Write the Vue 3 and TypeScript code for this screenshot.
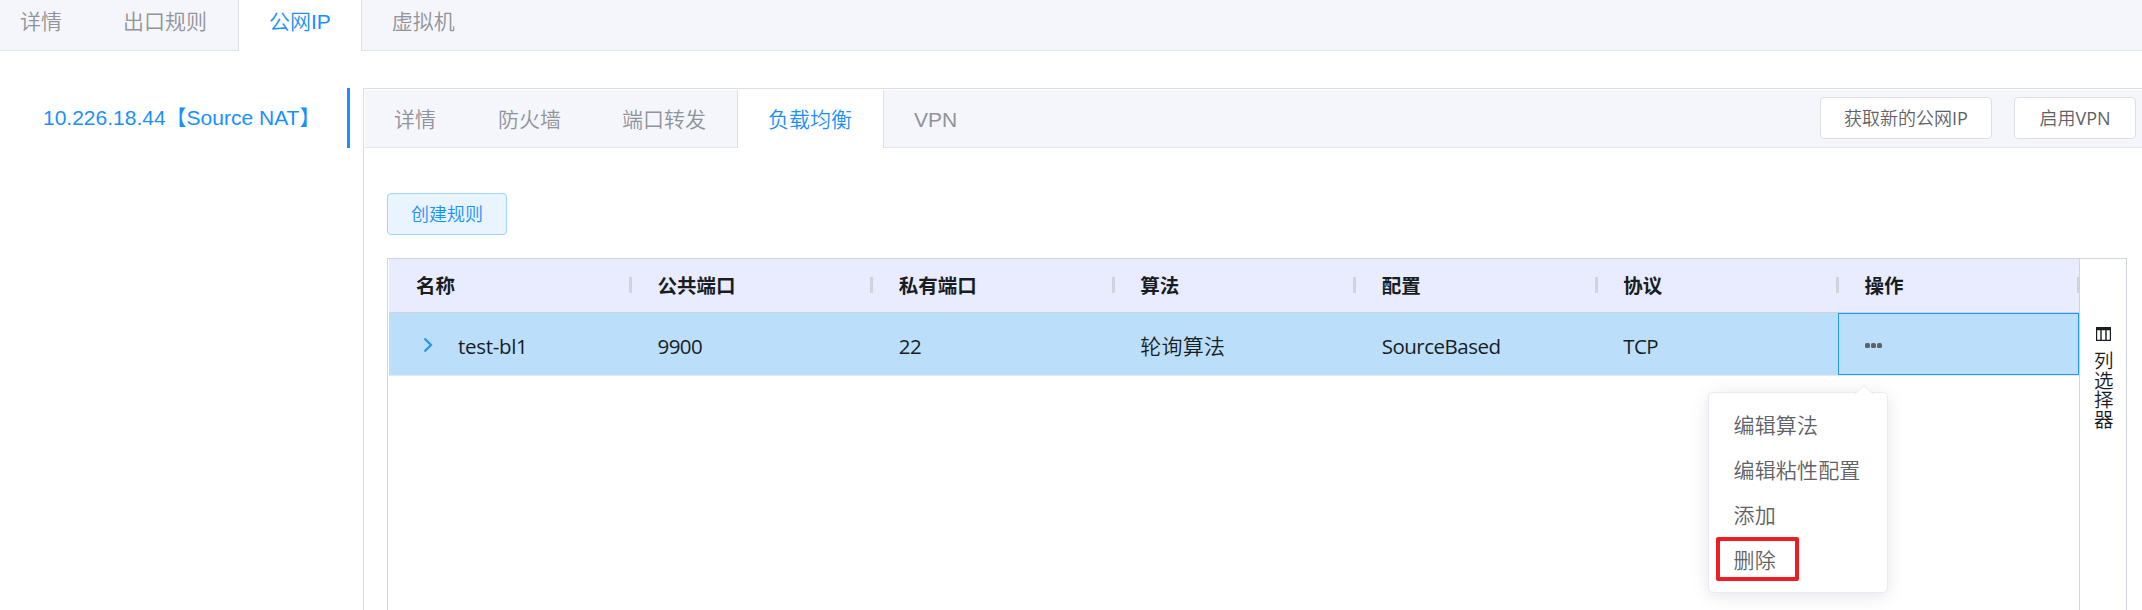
<script setup lang="ts">
import { ref } from 'vue'

interface Column {
  key: string
  title: string
}

const outerTabs = ['详情', '出口规则', '公网IP', '虚拟机']
const innerTabs = ['详情', '防火墙', '端口转发', '负载均衡', 'VPN']
const activeOuter = ref('公网IP')
const activeInner = ref('负载均衡')

const columns: Column[] = [
  { key: 'name', title: '名称' },
  { key: 'publicPort', title: '公共端口' },
  { key: 'privatePort', title: '私有端口' },
  { key: 'algorithm', title: '算法' },
  { key: 'config', title: '配置' },
  { key: 'protocol', title: '协议' },
  { key: 'actions', title: '操作' },
]

const rows: Record<string, string>[] = [
  {
    name: 'test-bl1',
    publicPort: '9900',
    privatePort: '22',
    algorithm: '轮询算法',
    config: 'SourceBased',
    protocol: 'TCP',
  },
]

const menu = ['编辑算法', '编辑粘性配置', '添加', '删除']
</script>

<template>
  <div class="page">
    <nav class="tabs outer">
      <button
        v-for="t in outerTabs"
        :key="t"
        class="tab"
        :class="{ active: t === activeOuter }"
        @click="activeOuter = t"
      >{{ t }}</button>
      <span class="fill"></span>
    </nav>

    <div class="body">
      <aside class="ips">
        <div class="ip">10.226.18.44【Source NAT】</div>
      </aside>

      <section class="panel">
        <nav class="tabs inner">
          <button
            v-for="t in innerTabs"
            :key="t"
            class="tab"
            :class="{ active: t === activeInner }"
            @click="activeInner = t"
          >{{ t }}</button>
          <div class="fill tools">
            <button class="btn wide">获取新的公网<span class="latin">IP</span></button>
            <button class="btn narrow">启用<span class="latin">VPN</span></button>
          </div>
        </nav>

        <div class="content">
          <button class="btn primary">创建规则</button>

          <div class="grid">
            <div class="main">
              <div class="row head">
                <div v-for="c in columns" :key="c.key" class="cell">
                  {{ c.title }}<i class="sep"></i>
                </div>
              </div>
              <div v-for="r in rows" :key="r.name" class="row data">
                <div
                  v-for="c in columns"
                  :key="c.key"
                  class="cell"
                  :class="['c-' + c.key, { focus: c.key === 'actions' }]"
                >
                  <svg v-if="c.key === 'name'" class="chev" width="10" height="16" viewBox="0 0 10 16">
                    <path d="M1.5 1.5 8 8 1.5 14.5" fill="none" stroke="#2196f3" stroke-width="2.2" />
                  </svg>
                  <template v-if="c.key === 'actions'">
                    <svg class="dots" width="17" height="5" viewBox="0 0 17 5" fill="#606266">
                      <rect x="0" width="5" height="5" rx="1.6" />
                      <rect x="6" width="5" height="5" rx="1.6" />
                      <rect x="12" width="5" height="5" rx="1.6" />
                    </svg>
                    <div class="menu">
                      <svg class="arrow" width="18" height="9" viewBox="0 0 18 9">
                        <path d="M0 9 9 .8 18 9" fill="#fff" stroke="#e6ebf5" />
                      </svg>
                      <div v-for="m in menu" :key="m" class="item" :class="{ marked: m === '删除' }">
                        {{ m }}
                      </div>
                    </div>
                  </template>
                  <span v-else>{{ r[c.key] }}</span>
                </div>
              </div>
            </div>
            <div class="side">
              <svg width="15" height="14" viewBox="0 0 15 14">
                <path d="M0 0h15v14H0zM1.2 3.2v9.6h3.1V3.2zM5.7 3.2v9.6h3.6V3.2zM10.7 3.2v9.6h3.1V3.2z" fill="#181d1f" fill-rule="evenodd" />
              </svg>
              <span>列选择器</span>
            </div>
          </div>
        </div>
      </section>
    </div>
  </div>
</template>

<style>
body {
  margin: 0;
  overflow: hidden;
}
</style>

<style scoped>
.page {
  width: 2142px;
  height: 610px;
  overflow: hidden;
  display: flex;
  flex-direction: column;
  background: #fff;
  font: 350 21px/24px "Liberation Sans", "Noto Sans CJK SC", sans-serif;
}
.page *,
.page *::after {
  box-sizing: border-box;
}
button {
  font: inherit;
  margin: 0;
  white-space: nowrap;
}
.tabs {
  display: flex;
  flex: none;
}
.tab,
.fill {
  background: #f5f6fb;
  border: 0 solid #dcdfe6;
  border-bottom: 1px solid #dfe4ed;
}
.tab {
  color: #909399;
  padding: 0 31px 0 30px;
}
.tab.active {
  color: #1890ff;
  background: #fff;
  border-width: 0 1px;
  padding: 0 30px;
}
.fill {
  flex: 1;
}
.outer {
  height: 51px;
}
.outer .tab {
  padding-bottom: 7px;
}
.outer .tab:first-child {
  padding-left: 20px;
}
.body {
  flex: 1;
  display: flex;
  padding-top: 37px;
  min-height: 0;
}
.ips {
  width: 350px;
  margin-right: 13px;
  flex: none;
}
.ip {
  height: 60px;
  line-height: 60px;
  padding-left: 43px;
  border-right: 3px solid #1890ff;
  color: #1890ff;
  white-space: nowrap;
}
.panel {
  flex: 1;
  min-width: 0;
  display: flex;
  flex-direction: column;
  border: solid #dcdfe6;
  border-width: 1px 0 0 1px;
}
.inner {
  height: 59px;
  padding: 1px 0 0 1px;
}
.inner .tab {
  padding-top: 2px;
}
.inner .tab:first-child {
  padding-left: 29px;
  padding-right: 32px;
}
.inner .tab.active {
  padding-right: 31px;
}
.tools {
  display: flex;
  justify-content: flex-end;
  gap: 22px;
  padding: 7px 6px 0 0;
}
.btn {
  height: 42px;
  padding: 0 23px;
  border: 1px solid #dcdfe6;
  border-radius: 4px;
  background: #fff;
  color: #606266;
  font: 350 18px/38px "Open Sans", "Noto Sans CJK SC", sans-serif;
}
.tools .btn {
  padding: 0;
}
.wide {
  width: 172px;
}
.narrow {
  width: 122px;
}
.latin {
  font-weight: 400;
}
.primary {
  align-self: flex-start;
  color: #1890ff;
  background: #e8f4ff;
  border-color: #a3d3ff;
}
.content {
  flex: 1;
  display: flex;
  flex-direction: column;
  gap: 23px;
  padding: 45px 15px 0 23px;
}
.grid {
  flex: 1;
  display: flex;
  border: solid #d0d4dc;
  border-width: 1px 1px 0;
  color: #181d1f;
  font-family: "Open Sans", "Noto Sans CJK SC", sans-serif;
}
.main {
  flex: 1;
  padding-left: 1px;
}
.row {
  display: grid;
  grid-template-columns: repeat(7, 1fr);
}
.cell {
  position: relative;
  display: flex;
  align-items: center;
  padding-left: 27px;
}
.head {
  height: 54px;
  background: #e9ecfe;
  border-bottom: 1px solid #cfd1dd;
  font-size: 19.5px;
  font-weight: 700;
}
.sep {
  position: absolute;
  right: -1.5px;
  top: 18px;
  width: 3px;
  height: 16px;
  background: #d0d4da;
}
.head .cell:last-child .sep {
  right: 0;
  width: 2px;
}
.data {
  height: 63px;
  background: #bbdefb;
  border-bottom: 1px solid #e2ebf5;
}
.cell.c-name {
  padding-left: 34px;
}
.data span {
  padding-top: 3px;
  font-weight: 400;
  font-size: 20.5px;
  letter-spacing: -0.5px;
}
.data .c-name span {
  letter-spacing: -0.3px;
}
.data .c-algorithm span {
  font-weight: 350;
  font-size: 21px;
  letter-spacing: 0.2px;
}
.chev {
  margin-right: 25px;
  margin-top: 1px;
}
.cell.focus {
  border: 1px solid #2196f3;
  padding-left: 26px;
}
.dots {
  margin-top: 3px;
}
.menu {
  position: absolute;
  z-index: 2;
  left: -131px;
  top: 78px;
  width: 180px;
  height: 201px;
  padding: 9px 0;
  border: 1px solid #e6ebf5;
  border-radius: 5px;
  background: #fff;
  box-shadow: 0 3px 18px rgba(0, 0, 0, 0.1);
  color: #606266;
  letter-spacing: 0.15px;
}
.arrow {
  position: absolute;
  right: 14px;
  top: -8px;
}
.item {
  position: relative;
  height: 45px;
  line-height: 46px;
  padding-left: 25px;
}
.marked::after {
  content: "";
  position: absolute;
  left: 7px;
  top: 0;
  width: 83px;
  height: 44px;
  border: 4px solid #f01c24;
  border-radius: 2px;
}
.side {
  width: 47px;
  border-left: 1px solid #d0d4dc;
  display: flex;
  flex-direction: column;
  align-items: center;
  gap: 10px;
  padding-top: 68px;
  font-size: 19.5px;
}
.side svg {
  flex: none;
  margin-left: 1px;
}
.side span {
  width: 20px;
  margin-left: 2px;
  line-height: 19.5px;
  word-break: break-all;
}
</style>
